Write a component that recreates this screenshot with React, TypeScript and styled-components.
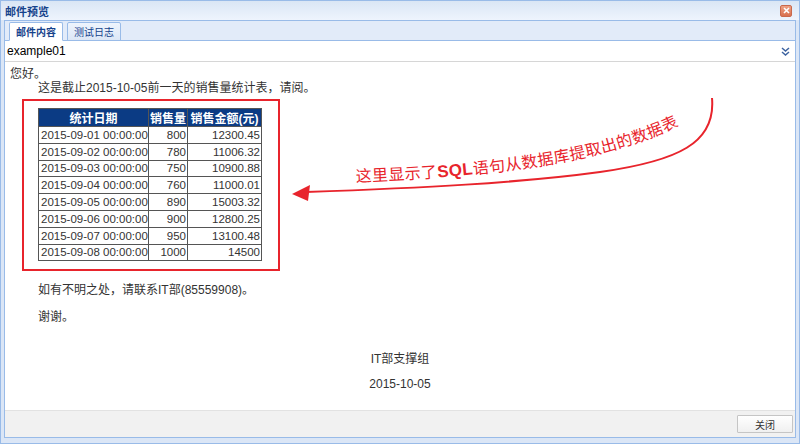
import React from 'react'
import styled, { createGlobalStyle } from 'styled-components'

const rows = [
    ['2015-09-01 00:00:00', '800', '12300.45'],
    ['2015-09-02 00:00:00', '780', '11006.32'],
    ['2015-09-03 00:00:00', '750', '10900.88'],
    ['2015-09-04 00:00:00', '760', '11000.01'],
    ['2015-09-05 00:00:00', '890', '15003.32'],
    ['2015-09-06 00:00:00', '900', '12800.25'],
    ['2015-09-07 00:00:00', '950', '13100.48'],
    ['2015-09-08 00:00:00', '1000', '14500'],
]

export default () => {

    return (
        <>
            <GlobalStyle />
            <Window>
                <Header>
                    <Title>邮件预览</Title>
                    <CloseTool>
                        <svg width="7" height="7" viewBox="0 0 7 7">
                            <path d="M1 1 L6 6 M6 1 L1 6" stroke="#fff" strokeWidth="1.6" />
                        </svg>
                    </CloseTool>
                </Header>
                <Body>
                    <Panel>
                        <TabStrip>
                            <Tab active>邮件内容</Tab>
                            <Tab>测试日志</Tab>
                        </TabStrip>
                        <Toolbar>
                            <Subject>example01</Subject>
                            <svg width="9" height="9" viewBox="0 0 9 9">
                                <path d="M1 1 L4.5 4 L8 1 M1 5 L4.5 8 L8 5" stroke="#3d63a0" strokeWidth="1.5" fill="none" />
                            </svg>
                        </Toolbar>
                        <Content>
                            <Line>您好。</Line>
                            <Line indent>这是截止2015-10-05前一天的销售量统计表，请阅。</Line>
                            <Highlight>
                                <DataTable>
                                    <thead>
                                        <tr>
                                            <Th w={109}>统计日期</Th>
                                            <Th w={38}>销售量</Th>
                                            <Th w={73}>销售金额(元)</Th>
                                        </tr>
                                    </thead>
                                    <tbody>
                                        {rows.map(r => (
                                            <tr key={r[0]}>
                                                <Td>{r[0]}</Td>
                                                <Td num>{r[1]}</Td>
                                                <Td num>{r[2]}</Td>
                                            </tr>
                                        ))}
                                    </tbody>
                                </DataTable>
                            </Highlight>
                            <Para>如有不明之处，请联系IT部(85559908)。</Para>
                            <Para>谢谢。</Para>
                            <Signature>
                                <div>IT部支撑组</div>
                                <div>2015-10-05</div>
                            </Signature>
                            <Annotation width="790" height="350" viewBox="5 61 790 350">
                                <path d="M712 97 C716 142, 678 160, 600 171 C520 182, 420 187, 306 191"
                                    stroke="#e8242c" strokeWidth="2" fill="none" />
                                <path d="M292 193 L310 184 L308 200 Z" fill="#e8242c" />
                                <path id="notePath" d="M356 181 C470 176, 600 167, 688 120" fill="none" />
                                <text fill="#e8242c" fontSize="16" fontFamily="'Noto Sans CJK SC', sans-serif">
                                    <textPath href="#notePath" textLength="330" lengthAdjust="spacing">
                                        这里显示了<tspan fontWeight="bold" fontFamily="'Liberation Sans', sans-serif" fontSize="17">SQL</tspan>语句从数据库提取出的数据表
                                    </textPath>
                                </text>
                            </Annotation>
                        </Content>
                        <Footer>
                            <Button>关闭</Button>
                        </Footer>
                    </Panel>
                </Body>
            </Window>
        </>
    )
}

// STYLE PROPERTIES
const GlobalStyle = createGlobalStyle`
    html, body { margin: 0; padding: 0; background: #fff; }
    body { font-family: 'Liberation Sans', 'Noto Sans CJK SC', sans-serif; }
`
const Window = styled.div`
    width: 800px;
    height: 444px;
    box-sizing: border-box;
    border: 1px solid #99bbe8;
    background: #dbe6f6;
    display: flex;
    flex-direction: column;
`
const Header = styled.div`
    height: 19px;
    display: flex;
    align-items: center;
    justify-content: space-between;
    padding: 0 4px 0 4px;
    background: linear-gradient(#dae6f5, #eef4fd);
`
const Title = styled.div`
    font-size: 11px;
    font-weight: bold;
    color: #15428b;
`
const CloseTool = styled.div`
    width: 10px;
    height: 10px;
    border-radius: 2px;
    background: linear-gradient(#eea184, #d8704f);
    border: 1px solid #c9694c;
    display: flex;
    align-items: center;
    justify-content: center;
    margin-right: 3px;
`
const Body = styled.div`
    flex: 1;
    display: flex;
    padding: 0 3px 5px 3px;
`
const Panel = styled.div`
    flex: 1;
    display: flex;
    flex-direction: column;
    border: 1px solid #99bbe8;
    background: #fff;
`
const TabStrip = styled.div`
    height: 19px;
    display: flex;
    align-items: flex-end;
    gap: 4px;
    padding-left: 4px;
    background: #e2ebf9;
    border-bottom: 1px solid #99bbe8;
`
const Tab = styled.div<{ active?: boolean }>`
    height: 17px;
    margin-bottom: -1px;
    padding: 0 6px;
    display: flex;
    align-items: center;
    font-size: 10px;
    font-weight: ${p => (p.active ? 'bold' : 'normal')};
    color: #15428b;
    border: 1px solid #99bbe8;
    border-bottom-color: ${p => (p.active ? '#fff' : '#99bbe8')};
    border-radius: 2px 2px 0 0;
    background: ${p => (p.active ? 'linear-gradient(#fff, #fdfeff)' : 'linear-gradient(#eef4fd, #dce7f6)')};
`
const Toolbar = styled.div`
    height: 20px;
    display: flex;
    align-items: center;
    justify-content: space-between;
    padding: 0 5px 0 2px;
    border-bottom: 1px solid #d6d6d6;
`
const Subject = styled.div`
    font-size: 12px;
    color: #000;
`
const Content = styled.div`
    flex: 1;
    position: relative;
    padding: 5px 5px 0 5px;
    font-size: 12px;
    color: #333;
`
const Line = styled.div<{ indent?: boolean }>`
    line-height: 14px;
    padding-left: ${p => (p.indent ? 28 : 0)}px;
`
const Highlight = styled.div`
    width: 225px;
    margin: 4px 0 -2px 12px;
    padding: 7px 15px 8px 14px;
    border: 2px solid #e8242c;
`
const DataTable = styled.table`
    border-collapse: collapse;
    width: 224px;
    table-layout: fixed;
    font-family: 'Liberation Sans', 'Noto Sans CJK SC', sans-serif;
    font-size: 11.5px;
    thead tr { height: 17px; }
    tbody tr { height: 16.8px; }
`
const Th = styled.th<{ w: number }>`
    width: ${p => p.w}px;
    padding: 0;
    background: #0b3b84;
    color: #fff;
    font-size: 12px;
    font-weight: bold;
    border: 1px solid #555;
    white-space: nowrap;
`
const Td = styled.td<{ num?: boolean }>`
    padding: 0 1px 0 2px;
    color: #333;
    text-align: ${p => (p.num ? 'right' : 'left')};
    border: 1px solid #555;
    white-space: nowrap;
    overflow: hidden;
`
const Para = styled.div`
    margin: 15px 0 0 28px;
    line-height: 12px;
`
const Signature = styled.div`
    margin-top: 30px;
    text-align: center;
    line-height: 12px;
    display: flex;
    flex-direction: column;
    gap: 13px;
`
const Annotation = styled.svg`
    position: absolute;
    left: 0;
    top: 0;
    pointer-events: none;
`
const Footer = styled.div`
    height: 26px;
    display: flex;
    align-items: center;
    justify-content: flex-end;
    padding-right: 2px;
    background: #f1f1f1;
    border-top: 1px solid #e2e2e2;
`
const Button = styled.div`
    width: 54px;
    height: 16px;
    display: flex;
    align-items: center;
    justify-content: center;
    font-size: 10px;
    color: #333;
    background: linear-gradient(#fff, #f0f0f0);
    border: 1px solid #c5c5c5;
    border-radius: 1px;
`
